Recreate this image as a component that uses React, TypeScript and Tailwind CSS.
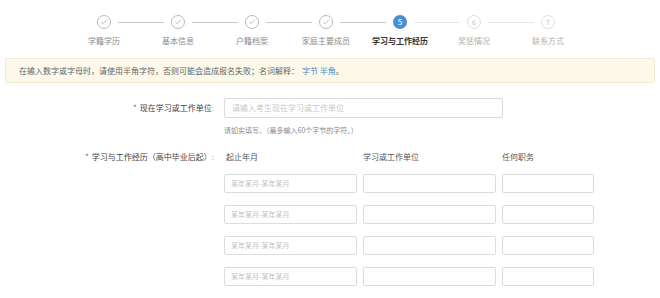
import { Check } from "lucide-react";

const steps = [
    { label: "学籍学历", state: "done" },
    { label: "基本信息", state: "done" },
    { label: "户籍档案", state: "done" },
    { label: "家庭主要成员", state: "done" },
    { label: "学习与工作经历", state: "current" },
    { label: "奖惩情况", state: "todo" },
    { label: "联系方式", state: "todo" },
];

const font = { fontFamily: '"Noto Sans CJK SC", "Noto Sans", sans-serif' };

function StepCircle({ state, n }: { state: string; n: number }) {
    if (state === "done") {
        return (
            <div className="w-[14px] h-[14px] rounded-full border border-[#b9b9b9] flex items-center justify-center shrink-0">
                <Check size={8} strokeWidth={2} className="text-[#9a9a9a]" />
            </div>
        );
    }
    if (state === "current") {
        return (
            <div className="w-[14px] h-[14px] rounded-full bg-[#4a8ed3] text-white text-[8px] leading-none flex items-center justify-center shrink-0">
                {n}
            </div>
        );
    }
    return (
        <div className="w-[14px] h-[14px] rounded-full border border-[#dedede] text-[#c4c4c4] text-[7px] leading-none flex items-center justify-center shrink-0">
            {n}
        </div>
    );
}

function Steps() {
    return (
        <div className="flex pl-[67px] pt-[15px]">
            {steps.map((s, i) => {
                const leftColor = i === 0 ? "bg-transparent" : i <= 4 ? "bg-[#c9c9c9]" : "bg-[#e6e6e6]";
                const rightColor = i === steps.length - 1 ? "bg-transparent" : i < 4 ? "bg-[#c9c9c9]" : "bg-[#e6e6e6]";
                const labelColor =
                    s.state === "current" ? "text-[#333] font-bold" : s.state === "done" ? "text-[#8a8a8a]" : "text-[#b0b0b0]";
                return (
                    <div key={s.label} className="w-[74px] flex flex-col items-center">
                        <div className="w-full flex items-center">
                            <div className={`h-px w-[23px] ${leftColor}`} />
                            <div className="w-[7px]" />
                            <StepCircle state={s.state} n={i + 1} />
                            <div className="w-[7px]" />
                            <div className={`h-px w-[23px] ${rightColor}`} />
                        </div>
                        <div className={`mt-[7px] text-[8px] leading-[10px] whitespace-nowrap ${labelColor}`}>{s.label}</div>
                    </div>
                );
            })}
        </div>
    );
}

function Input({ w, placeholder }: { w: string; placeholder?: string }) {
    return (
        <div className={`${w} h-[19px] border border-[#dcdcdc] rounded-[2px] flex items-center px-[6px] text-[7px] text-[#c2c2c2] whitespace-nowrap`}>
            {placeholder}
        </div>
    );
}

export default function App() {
    return (
        <main className="w-[660px] h-[298px] bg-white overflow-hidden" style={font}>
            <Steps />

            {/* Notice */}
            <div className="mx-[5px] mt-[12px] h-[25px] rounded-[2px] border border-[#f2ead0] bg-[#fdf9ea] flex items-center pl-[13px] text-[8px] text-[#666]">
                在输入数字或字母时，请使用半角字符，否则可能会造成报名失败；名词解释：
                <span className="ml-[3px] text-[#4a87c4]">字节 半角</span>。
            </div>

            {/* Row 1 */}
            <div className="flex mt-[15px]">
                <div className="w-[214px] h-[20px] flex items-center justify-end text-[8px] text-[#444]">
                    <span className="text-[#666] mr-[3px]">*</span>现在学习或工作单位<span className="text-[#aaa]">:</span>
                </div>
                <div className="ml-[10px]">
                    <div className="w-[279px] h-[20px] border border-[#dcdcdc] rounded-[2px] flex items-center px-[7px] text-[8px] text-[#c8c8c8]">
                        请输入考生现在学习或工作单位
                    </div>
                    <div className="mt-[7px] text-[7px] leading-[10px] text-[#8a8a8a]">请如实填写。（最多输入60个字节的字符。）</div>
                </div>
            </div>

            {/* Row 2 */}
            <div className="flex mt-[16px]">
                <div className="w-[214px] h-[12px] flex items-center justify-end text-[8px] text-[#444]">
                    <span className="text-[#666] mr-[3px]">*</span>学习与工作经历（高中毕业后起）<span className="text-[#aaa]">:</span>
                </div>
                <div className="ml-[10px]">
                    <div className="flex h-[12px] items-center text-[8px] text-[#555]">
                        <div className="w-[139px] pl-[2px]">起止年月</div>
                        <div className="w-[139px]">学习或工作单位</div>
                        <div>任何职务</div>
                    </div>
                    <div className="mt-[11px] flex flex-col gap-[12px]">
                        {[0, 1, 2, 3].map((r) => (
                            <div key={r} className="flex gap-[6px]">
                                <Input w="w-[133px]" placeholder="某年某月-某年某月" />
                                <Input w="w-[133px]" />
                                <Input w="w-[92px]" />
                            </div>
                        ))}
                    </div>
                </div>
            </div>
        </main>
    );
}
